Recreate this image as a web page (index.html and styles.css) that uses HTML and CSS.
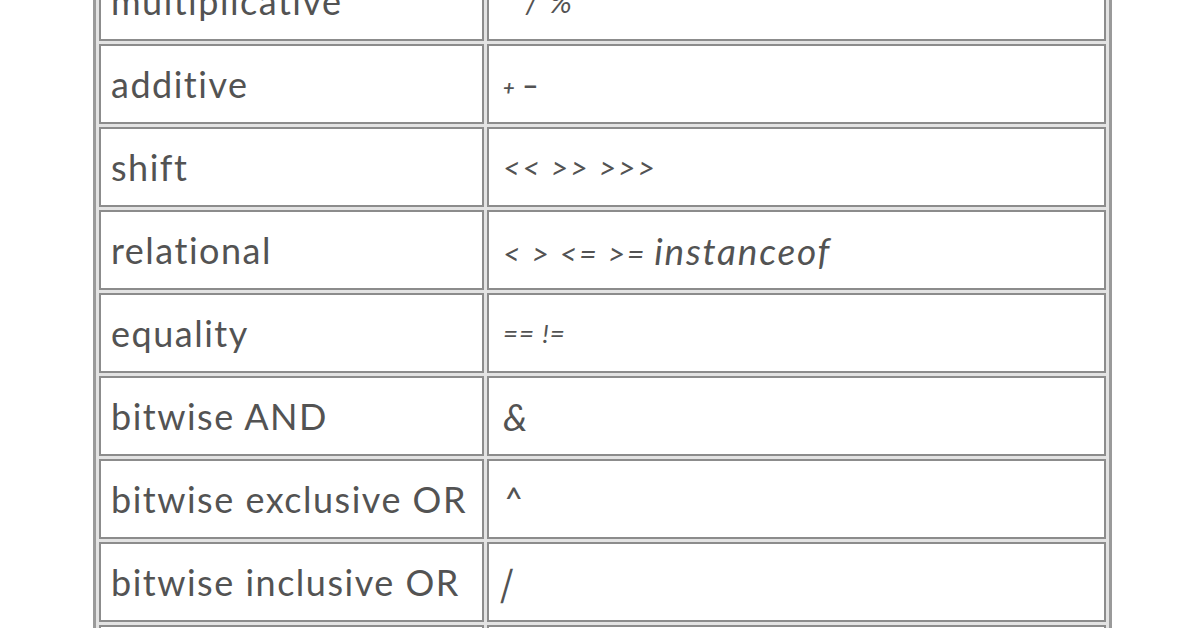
FILE: index.html
```html
<!DOCTYPE html>
<html>
<head>
<meta charset="utf-8">
<link rel="stylesheet" href="styles.css">
</head>
<body>
<div class="page">
<table class="ops">
  <tr><td class="name">multiplicative</td><td class="sym"><span class="op">* / %</span></td></tr>
  <tr><td class="name">additive</td><td class="sym"><span class="op plus">+</span> <span class="op minus">&ndash;</span></td></tr>
  <tr><td class="name">shift</td><td class="sym"><span class="op">&lt;&lt; &gt;&gt; &gt;&gt;&gt;</span></td></tr>
  <tr><td class="name">relational</td><td class="sym"><span class="op">&lt; &gt; &lt;= &gt;=</span> <span class="kw gap">instanceof</span></td></tr>
  <tr><td class="name">equality</td><td class="sym"><span class="op mid">== !=</span></td></tr>
  <tr><td class="name">bitwise AND</td><td class="sym"><span class="kw">&amp;</span></td></tr>
  <tr><td class="name">bitwise exclusive OR</td><td class="sym"><span class="op caret">^</span></td></tr>
  <tr><td class="name">bitwise inclusive OR</td><td class="sym"><span class="kw bar">|</span></td></tr>
  <tr><td class="name">logical AND</td><td class="sym"><span class="op">&amp;&amp;</span></td></tr>
</table>
</div>
</body>
</html>
```
FILE: styles.css
```css
html, body {
  margin: 0;
  padding: 0;
  background: #ffffff;
  overflow: hidden;
}
.page {
  padding-left: 93px;
}
.ops {
  margin-top: -45px;
  width: 1019px;
  border-collapse: separate;
  border-spacing: 3px;
  border: 3px solid #9a9a9a;
  background: #e3e3e3;
  font-family: Lato, "Open Sans", sans-serif;
  color: #535353;
}
.ops td {
  height: 76px;
  padding: 0 0 0 10px;
  border: 2px solid #8c8c8c;
  background: #ffffff;
  vertical-align: middle;
  box-sizing: content-box;
}
.ops td.name {
  width: 371px;
  font-size: 36px;
  letter-spacing: 1.5px;
  white-space: nowrap;
}
.ops td.sym {
  padding-left: 14px;
  font-style: italic;
}
.op {
  font-size: 30px;
  letter-spacing: 2px;
}
.op.plus {
  font-size: 20px;
  font-weight: 700;
  letter-spacing: 4px;
}
.op.minus {
  font-size: 28px;
  font-weight: 700;
  font-style: normal;
}
.op.mid {
  font-size: 26px;
  letter-spacing: 1px;
}
.op.caret {
  font-size: 34px;
}
.kw {
  font-size: 37px;
  letter-spacing: 1.8px;
}
.kw.gap {
  margin-left: 4px;
}
.kw.bar {
  display: inline-block;
  transform: skewX(-16deg);
}
```
